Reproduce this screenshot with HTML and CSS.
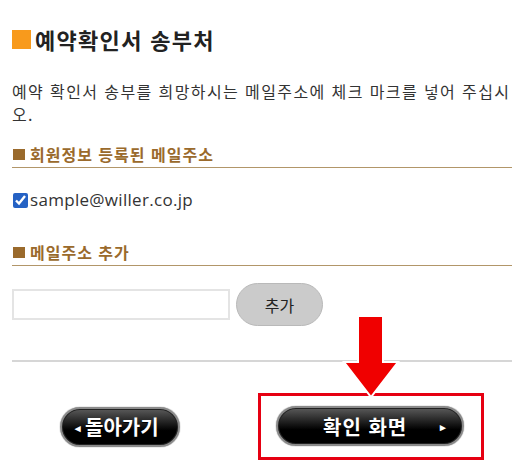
FILE: index.html
```html
<!DOCTYPE html>
<html lang="ko">
<head>
<meta charset="utf-8">
<link rel="stylesheet" href="styles.css">
</head>
<body>
<div class="page">
  <h1 class="title"><span class="title-mark"></span>예약확인서 송부처</h1>
  <p class="intro">예약 확인서 송부를 희망하시는 메일주소에 체크 마크를 넣어 주십시오.</p>

  <h2 class="sub"><span class="sub-mark"></span>회원정보 등록된 메일주소</h2>
  <label class="mail"><input type="checkbox" checked class="chk">sample@willer.co.jp</label>

  <h2 class="sub sub2"><span class="sub-mark"></span>메일주소 추가</h2>
  <div class="add-row">
    <input type="text" class="add-input">
    <button class="add-btn">추가</button>
  </div>

  <div class="rule"></div>

  <div class="actions">
    <button class="pill back"><span class="tri">◂</span>돌아가기</button>
    <div class="highlight">
      <button class="pill next"><span class="next-label">확인 화면</span><span class="tri">▸</span></button>
    </div>
    <svg class="arrow" width="58" height="84" viewBox="0 0 58 84">
      <polygon points="16,1 41,1 41,47 56,47 29,82 2,47 16,47" fill="#f00000" stroke="#fff" stroke-width="2" stroke-linejoin="miter"/>
    </svg>
  </div>
</div>
</body>
</html>
```

FILE: styles.css
```css
html, body {
  margin: 0;
  padding: 0;
  background: #fff;
}
body {
  font-family: "Noto Sans CJK KR", "Noto Sans", sans-serif;
  color: #333;
}
.page {
  width: 500px;
  padding: 0 11px 0 12px;
}
.title {
  display: flex;
  align-items: center;
  margin: 22px 0 0 0;
  font-size: 22px;
  line-height: 34px;
  font-weight: 700;
  color: #222;
  letter-spacing: 1.3px;
}
.title-mark {
  width: 19px;
  height: 19px;
  background: #f89a1c;
  margin-right: 4px;
}
.intro {
  margin: 24px 0 0 0;
  font-size: 16px;
  line-height: 23px;
  color: #333;
  letter-spacing: 1.4px;
}
.sub {
  display: flex;
  align-items: center;
  margin: 17px 0 0 0;
  font-size: 16px;
  line-height: 22px;
  font-weight: 700;
  color: #9a6a2c;
  padding-bottom: 2px;
  border-bottom: 1px solid #b29669;
  letter-spacing: 1px;
}
.sub-mark {
  width: 12px;
  height: 11px;
  background: #9a6a2c;
  margin: 0 5px 0 1px;
}
.sub2 {
  margin-top: 29px;
}
.mail {
  display: flex;
  align-items: center;
  margin-top: 20px;
  font-family: "Open Sans", "Noto Sans CJK KR", sans-serif;
  font-size: 17px;
  line-height: 24px;
  color: #333;
  letter-spacing: 0.3px;
}
.chk {
  width: 15px;
  height: 15px;
  margin: 0 2px 0 1px;
  accent-color: #2562c4;
}
.add-row {
  display: flex;
  align-items: center;
  margin-top: 17px;
}
.add-input {
  width: 214px;
  height: 27px;
  border: 2px solid #e4e4e4;
  padding: 0;
  margin: 0 6px 0 0;
  box-sizing: content-box;
}
.add-btn {
  width: 87px;
  height: 43px;
  border-radius: 22px;
  border: 1px solid #b9b9b9;
  background: #cbcbcb;
  font-family: "Noto Sans CJK KR", sans-serif;
  font-size: 16px;
  color: #222;
  padding: 0;
}
.rule {
  margin-top: 34px;
  height: 2px;
  background: #d6d6d6;
}
.actions {
  position: relative;
  display: flex;
  align-items: center;
  padding-left: 48px;
  margin-top: 31px;
}
.highlight {
  margin-left: 78px;
  border: 3px solid #e60012;
  padding: 10px 17px 11px 15px;
}
.pill {
  display: flex;
  align-items: center;
  height: 40px;
  box-sizing: border-box;
  border-radius: 20px;
  border: 2px solid #8a8a8a;
  background: linear-gradient(#5a5a5a 0%, #161616 45%, #000 60%, #000 100%);
  box-shadow: inset 0 0 0 1px #222, 0 0 1px #444;
  color: #fff;
  font-family: "Noto Sans CJK KR", sans-serif;
  font-weight: 700;
  font-size: 20px;
  padding: 0;
  text-shadow: 0 1px 0 #000;
}
.back {
  width: 120px;
  padding-left: 13px;
}
.back .tri {
  font-size: 11px;
  margin-right: 4px;
}
.next {
  width: 188px;
  padding-left: 45px;
}
.next-label {
  letter-spacing: 1px;
}
.next .tri {
  font-size: 11px;
  margin-left: 33px;
}
.arrow {
  position: absolute;
  left: 330px;
  top: -78px;
}
```
